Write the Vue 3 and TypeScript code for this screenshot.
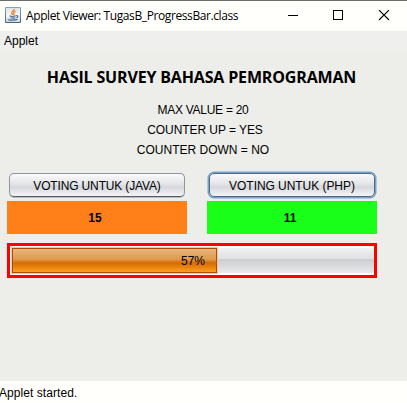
<script setup lang="ts">
import { computed, ref } from 'vue'

const java = ref(15)
const php = ref(11)
const info = ['MAX VALUE = 20', 'COUNTER UP = YES', 'COUNTER DOWN = NO']
const percent = computed(() => Math.floor((java.value / (java.value + php.value)) * 100))
</script>

<template>
  <div class="window">
    <header class="titlebar">
      <svg class="logo" width="16" height="16" viewBox="0 0 16 16">
        <defs>
          <linearGradient id="tile" x1="0" y1="0" x2="0" y2="1">
            <stop offset="0" stop-color="#8ba4b6" />
            <stop offset="1" stop-color="#48677e" />
          </linearGradient>
          <linearGradient id="face" x1="0" y1="0" x2="0" y2="1">
            <stop offset="0" stop-color="#dce5ec" />
            <stop offset="0.5" stop-color="#f6f8f9" />
            <stop offset="1" stop-color="#cbd7e0" />
          </linearGradient>
        </defs>
        <rect width="16" height="16" rx="1" fill="url(#tile)" />
        <rect x="1" y="1" width="14" height="14" fill="url(#face)" />
        <path d="M9.3 1.8C9.6 4 5.8 4.5 6.6 6.3L7.7 8M10.7 4.2C8.6 5 8.1 5.7 9 6.8L8.6 8.2" fill="none" stroke="#e98a38" stroke-width="1.4" />
        <path d="M4.5 8.8C6 9.6 9 9.5 10.8 8.8M5.3 10.7C7 11.3 9 11.2 10.3 10.7M11.2 8.7C13.4 8.2 13.4 10 11.4 10.8M3.4 12.2C2.6 13.2 9.5 13.6 12.5 12.3" fill="none" stroke="#456f95" stroke-width="1.2" />
      </svg>
      <span class="caption">Applet Viewer: TugasB_ProgressBar.class</span>
      <svg class="controls" width="104" height="12" viewBox="0 0 104 12" fill="none" stroke="#000">
        <path d="M0 5.5H10" shape-rendering="crispEdges" />
        <rect x="45.5" y="0.5" width="9" height="9" shape-rendering="crispEdges" />
        <path d="M91 0L101 10M101 0L91 10" stroke-width="1.1" />
      </svg>
    </header>
    <nav class="menubar"><span>Applet</span></nav>
    <main class="applet">
      <h1>HASIL SURVEY BAHASA PEMROGRAMAN</h1>
      <p v-for="(line, i) in info" :key="line" :class="'info info-' + i">{{ line }}</p>
      <div class="votes">
        <section class="vote java">
          <button type="button"><span>VOTING UNTUK (JAVA)</span></button>
          <strong>{{ java }}</strong>
        </section>
        <section class="vote php">
          <button type="button" class="focused"><span>VOTING UNTUK (PHP)</span></button>
          <strong>{{ php }}</strong>
        </section>
      </div>
      <div class="progress">
        <div class="track">
          <div class="bar" :style="{ width: percent + '%' }"></div>
          <span class="percent">{{ percent }}%</span>
        </div>
      </div>
    </main>
    <footer class="status">Applet started.</footer>
  </div>
</template>

<style>
body {
  margin: 0;
  overflow: hidden;
}
</style>

<style scoped>
.window {
  box-sizing: border-box;
  width: 407px;
  height: 403px;
  display: flex;
  flex-direction: column;
  background: #fffffc;
  color: #000;
  font: 12px/20px "Liberation Sans", Arial, sans-serif;
}
.titlebar {
  box-sizing: border-box;
  height: 31px;
  flex: none;
  display: flex;
  align-items: flex-start;
  border-top: 1px solid #6c6c6a;
  padding: 6px 12px 0 5px;
}
.caption {
  margin: -1px 0 0 5px;
  font: 12px/20px "Open Sans", "Segoe UI", sans-serif;
  letter-spacing: -0.4px;
  white-space: nowrap;
}
.controls {
  margin: 3px 3px 0 auto;
  flex: none;
}
.menubar {
  height: 21px;
  flex: none;
  padding-left: 4px;
  background: #efefee;
}
.applet {
  box-sizing: border-box;
  height: 329px;
  flex: none;
  background: #edeeea;
  padding: 13px 30px 0 7px;
}
h1 {
  margin: 0 -19px 11px 0;
  height: 24px;
  text-align: center;
  font: bold 16px/24px "Open Sans", sans-serif;
  letter-spacing: -0.16px;
  white-space: nowrap;
}
.info {
  margin: 0 -22px 0 0;
  text-align: center;
  height: 20px;
}
.info-0 { letter-spacing: -0.28px; }
.info-1 { margin-right: -26px; letter-spacing: -0.06px; }
.votes {
  display: flex;
  gap: 20px;
  margin-top: 12px;
}
.vote {
  display: flex;
  flex-direction: column;
}
.java { width: 180px; }
.php { width: 170px; }
button {
  box-sizing: border-box;
  height: 24px;
  margin: 1px 2px 4px;
  padding: 1px 0 0;
  border: 1px solid #8e959d;
  border-bottom-color: #555c66;
  border-radius: 5px;
  background: linear-gradient(#fafafb, #e4e5e8 45%, #d5d7db 60%, #f4f5f8);
  box-shadow: 0 1px 0 #b8bcc0;
  font: 12px/20px "Liberation Sans", Arial, sans-serif;
  color: #000;
  white-space: nowrap;
}
.java button { letter-spacing: -0.15px; }
.php button { letter-spacing: -0.05px; }
.focused {
  border-color: #55657a;
  box-shadow: 0 0 0 1.5px #73a4d1;
}
strong {
  height: 33px;
  line-height: 34px;
  text-align: center;
}
.java strong { background: #ff8019; padding-right: 4px; }
.php strong { background: #19ff19; padding-right: 4px; }
.progress {
  box-sizing: border-box;
  height: 35px;
  margin-top: 9px;
  border: 3px solid #f00;
  background: #fff;
  padding: 2px 0 2px 2px;
}
.track {
  position: relative;
  height: 25px;
  padding-right: 2px;
  background: linear-gradient(#f0f1f2, #dfe0e1 43%, #cccdcf 46%, #e9eaec);
}
.bar {
  box-sizing: border-box;
  height: 25px;
  border: 1px solid #b34800;
  background: linear-gradient(#e9b57d, #e09a4e 45%, #d46b00 60%, #ff9c20);
  box-shadow: 0 0 0 1px #e9c9a8;
}
.percent {
  position: absolute;
  inset: 3px 0 auto;
  text-align: center;
}
.status {
  line-height: 24px;
  margin-left: -1px;
  letter-spacing: 0.06px;
}
</style>
